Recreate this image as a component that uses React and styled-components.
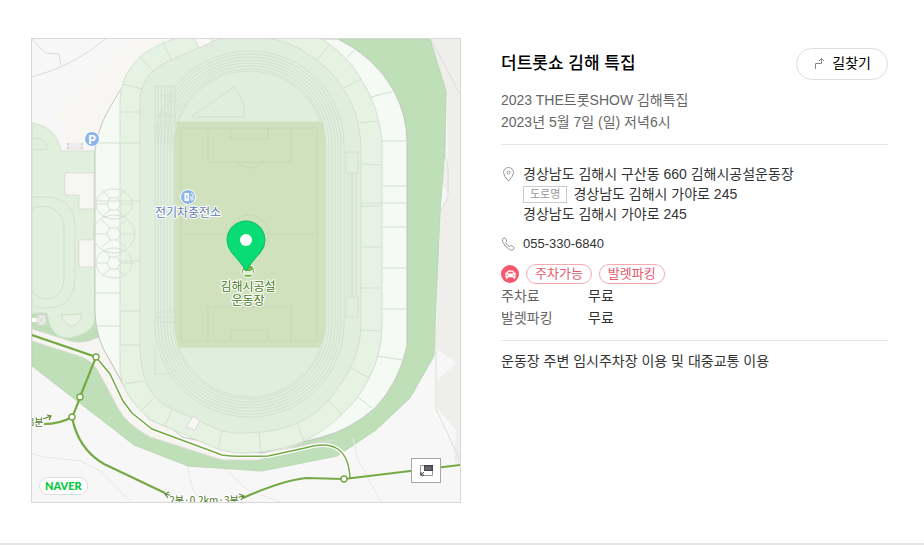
import React from "react";
import styled, { createGlobalStyle } from "styled-components";
import { FaCar as CarIcon } from "react-icons/fa";

const GlobalStyle = createGlobalStyle`
  * {
    box-sizing: border-box;
  }

  body {
    margin: 0;
    background: #fff;
    color: #333;
    font-family: "Liberation Sans", "Noto Sans CJK KR", sans-serif;
    font-size: 14px;
    line-height: 20px;
  }
`;

const Section = styled.section`
  display: grid;
  grid-template-columns: minmax(0, 430fr) minmax(0, 387fr);
  align-items: start;
  gap: 40px;
  padding: 38px 36px 40px 31px;
  border-bottom: 2px solid #e5e5e5;
`;

const MapBox = styled.div`
  position: relative;
  border: 1px solid #d9d9d9;
  overflow: hidden;
`;

const MapDrawing = styled.svg`
  display: block;
  width: 100%;
  height: auto;

  text {
    font-family: "Noto Sans CJK KR", sans-serif;
    paint-order: stroke;
    stroke: #fff;
    stroke-width: 2px;
    stroke-linejoin: round;
    text-anchor: middle;
  }
`;

const NaverLogo = styled.a`
  position: absolute;
  left: 7px;
  bottom: 7px;
  padding: 0 5px;
  border: 1px solid #ddd;
  border-radius: 9px;
  background: #fff;
  color: #03c73c;
  font-family: Lato, sans-serif;
  font-size: 11px;
  font-weight: 900;
  line-height: 16px;
  text-decoration: none;
`;

const MiniMapButton = styled.button`
  position: absolute;
  right: 19px;
  bottom: 19px;
  display: flex;
  align-items: center;
  justify-content: center;
  width: 30px;
  height: 25px;
  padding: 0;
  border: 1px solid #a5a5ae;
  background: #fff;
  cursor: pointer;
`;

const Info = styled.div`
  padding-top: 10px;
`;

const Header = styled.header`
  display: flex;
  align-items: center;
  justify-content: space-between;
  margin-bottom: 9px;
`;

const Title = styled.h2`
  margin: 0;
  color: #000;
  font-size: 17px;
  font-weight: 500;
  line-height: 32px;
`;

const RouteButton = styled.button`
  display: flex;
  align-items: center;
  gap: 8px;
  height: 32px;
  padding: 0 16px 2px 17px;
  border: 1px solid #ddd;
  border-radius: 16px;
  background: #fff;
  color: #000;
  font: inherit;
  cursor: pointer;
`;

const Description = styled.p`
  margin: 0;
  color: #666;
  line-height: 22px;
`;

const Divider = styled.hr`
  margin: 11px 0 19px;
  border: 0;
  border-top: 1px solid #e5e5e5;
`;

const ContactRow = styled.div`
  display: flex;
  gap: 8px;
  margin-bottom: 10px;

  & > svg {
    flex: none;
    margin-top: 3px;
  }
`;

const Address = styled.address`
  font-style: normal;
`;

const AddressLine = styled.div`
  display: flex;
  align-items: center;
  gap: 6px;
`;

const RoadBadge = styled.span`
  padding: 0 6px;
  border: 1px solid #c8ccd2;
  color: #999;
  font-size: 11px;
  line-height: 15px;
`;

const Phone = styled.a`
  color: #333;
  font-size: 13px;
  text-decoration: none;
`;

const TagRow = styled.div`
  display: flex;
  align-items: center;
  gap: 7px;
  margin-bottom: 1px;
`;

const CarBadge = styled.span`
  display: flex;
  align-items: center;
  justify-content: center;
  width: 18px;
  height: 18px;
  border-radius: 50%;
  background: #f9576f;
  color: #fff;
  font-size: 11px;
`;

const Tag = styled.span`
  padding: 0 8px;
  border: 1px solid #f5a9b1;
  border-radius: 10px;
  color: #e4586c;
  font-size: 13px;
  line-height: 18px;
`;

const FeeList = styled.dl`
  display: grid;
  grid-template-columns: 87px 1fr;
  margin: 0;
  line-height: 22px;

  dt {
    color: #666;
  }

  dd {
    margin: 0;
  }
`;

const Notice = styled.p`
  margin: -9px 0 0;
`;

// distances of the lane lines from the outer edge of the running track
const LANES = [0, 3, 6, 9, 12, 15, 18, 20];

const OUTER_RING =
  "M95 151Q96 137 102 123Q110 106 123 86Q126 70 145 54L177 39H338Q375 57 394 91Q407 116 407 141V346Q399 383 375 408Q350 430 322 437L261 453L182 437L124 385L104 350Q96 335 95 312Z";
const MIDDLE_RING =
  "M120 101Q120 76 140 57Q150 47 177 38L220 30L305 30Q344 48 361 79Q379 107 382 141V325Q382 354 369 378Q359 399 342 414Q325 431 304 441Q282 451 248 453Q235 454 218 449L165 426Q150 421 141 411Q122 391 120 372Z";
const INNER_RING =
  "M140 101Q140 73 171 60L211 42Q223 37 244 36Q285 35 317 60Q361 95 361 151V325Q361 362 328 401Q302 431 249 433Q235 434 222 431L172 409Q140 395 140 346Z";

const Grounds = () => (
  <g>
    <path d="M32 39H136L83 85V151H32Z" fill="#f7f7f7" />
    <path d="M136 39L83 85V133L95 151L104 118L123 86L140 57L175 39Z" fill="#f8f6f2" />
    <path d="M56 116L67 132V151H95L83 130V85Z" fill="#f8f6f2" />
    <path d="M105 39Q76 65 32 77M32 39L45 53L59 54L61 65" fill="none" stroke="#d9dada" />
    <path d="M430 39H460V466L454 460L456 430L437 408L436 180L448 160L446 91Z" fill="#efeeeb" />
    <path d="M437 350L448 357H451L456 364L447 371L437 381ZM442 184L449 195L440 212Z" fill="#f8f7f8" />
    <path d="M430 39Q444 62 460 95M444 148L448 168V196L440 213M436 330V409L460 460" fill="none" stroke="#dadfd8" />
    <path
      d="M338 39H430L446 91L445 148L440 212L436 302L434 356L410 398L376 430L337 456L262 471L188 466L134 445L32 366V335L95 355L120 404L180 438L261 457L322 437L375 408L407 346V141L394 91Z"
      fill="#bedfb8"
      stroke="#bad9b5"
    />
    <path d="M32 313H60L96 312L99 337L96 348L32 330Z" fill="#bedfb8" />
    <path
      d="M32 329L61 338Q80 347 99 337L104 350L130 398L150 420L220 449L261 453L335 440L304 445L258 460H222L150 437Q126 424 118 408L97 369Q91 361 82 357L32 341Z"
      fill="#f7f5f2"
      stroke="#d9ddd5"
    />
    <path
      d="M32 123Q57 127 61 151H95V173H65V195H79V209H94V240H79V267H95V318Q94 330 80 335Q54 345 48 318L47 313H32Z"
      fill="#e0f0dc"
      stroke="#d3e2cf"
    />
    <path d="M65 173H94V209H79V195H65ZM79 240H94V267H79Z" fill="#f8f6f3" stroke="#dde1d8" />
    <path
      d="M32 197H48Q75 199 75 228V277Q75 306 49 308Q40 309 32 305M32 209Q41 204 51 208Q63 213 64 226V280Q62 297 49 299Q38 300 32 290M32 139Q45 136 48 149L32 150"
      fill="none"
      stroke="#d0e1ce"
    />
    <path d="M61 315L82 314Q79 325 72 326Q64 325 61 315Z" fill="#e8f3e5" stroke="#cedfca" />
    <path d="M67 143H83V151H67Z" fill="#eeebea" />
    <path d="M68 143V151M82 143V151" stroke="#b8b8b4" strokeDasharray="2 2" />
    <path d="M32 318H37V322H32Z" fill="#fff" />
    <path
      d="M37 315H46V325H37ZM37 315L46 325M46 315L37 325"
      fill="#ecefe9"
      stroke="#d1d7cd"
    />
    <path
      d="M32 453L43 457L81 461L102 472L131 502M188 467Q190 489 199 498M225 469L248 490L280 502M353 438L357 458L381 502"
      fill="none"
      stroke="#e7e9e5"
    />
  </g>
);

const Stadium = () => (
  <g fill="none" stroke="#d2e1d0">
    <path d={OUTER_RING} fill="#f5faf5" stroke="#bfc9bd" />
    <path d={MIDDLE_RING} fill="#e6f3e2" />
    <path d={INNER_RING} fill="#e0efdd" />
    <path d="M123 84L142 89M140 57L153 71M163 41L171 60M120 112H140M95 143H140M95 201H140M120 261H140M95 293H120M95 326H120M120 311H140M120 345H140M125 384L143 381M141 411L154 398M165 426L172 409M218 449L222 431" />
    <path d="M330 44L317 60M355 50L347 57M361 79L344 88M394 91L371 97M379 121L359 123M382 141H407M361 164L382 165M382 186H407M361 203H407M361 206H382M382 227H407M361 247H382M382 268H407M361 288H382M382 309H407M361 330L382 331M377 356L403 360M369 378L351 368M372 408L358 397M342 414L328 401M304 441L297 423M261 453L259 433" />
    <path d="M194 38L199 48L212 42L208 35Z" fill="#fbf9f6" stroke="#d8ddd4" />
    <path d="M188 424L193 416L200 421L195 430L186 427Z" fill="#f8f6f4" stroke="#d7dcd3" />
    {[204, 234, 263].map((y) => (
      <g key={y} stroke="#d6e0d5">
        <ellipse cx="114" cy={y} rx={y === 234 ? 21 : 18} ry={y === 234 ? 19 : 15} />
        <path
          d={`M107 ${y}L110 ${y - 6}H117L121 ${y}L117 ${y + 6}H110ZM94 ${y}H107M121 ${y}H134M110 ${y - 6}L102 ${y - 14}M117 ${y - 6}L126 ${y - 14}M110 ${y + 6}L102 ${y + 13}M117 ${y + 6}L126 ${y + 13}`}
        />
      </g>
    ))}
    {LANES.map((lane) => (
      <rect
        key={lane}
        x={155 + lane}
        y={51 + lane}
        width={189 - lane * 2}
        height={366 - lane * 2}
        rx={94 - lane}
      />
    ))}
    <path d="M155 86H175V146M155 86V145M158 86V145M161 86V145M165 86V145M168 86V145M171 86V145M155 96H175M155 116H175M155 136H175M155 312H175M155 317H175M155 322H175M155 346V374H171" />
    <path d="M178 122H322L325 140V330L320 347H179L175 330V140Z" fill="#d0e2bd" stroke="#cbdebb" />
    <g stroke="#c5d7b4">
      <path d="M181 128H317V341H181ZM181 234H317M208 128V162H291V128M231 128V139H268V128M208 341V307H291V341M231 341V330H268V341" />
      <path d="M236 162Q250 174 263 162M236 307Q250 295 263 307" />
      <circle cx="249" cy="235" r="20" />
    </g>
    <path d="M191 117L234 87Q246 101 244 117Z" />
    <path d="M346 152H358V173H346ZM346 297H358V317H346ZM348 173V297M351 173V297M353 173V297M356 173V297" />
  </g>
);

const Routes = () => (
  <g fill="none" stroke="#75a944">
    <path d="M96 357L110 374L123 401L132 413L152 429L222 455Q231 457 268 456L305 448Q348 435 350 478" stroke="#fff" strokeWidth="4" />
    <path d="M96 357L110 374L123 401L132 413L152 429L222 455Q231 457 268 456L305 448Q348 435 350 478" strokeWidth="1.5" />
    <path d="M32 335L96 357L80 397Q76 409 72 417Q60 424 44 424M72 417Q78 449 104 464L165 493M243 498L252 494Q286 480 306 478L344 479L460 465" strokeWidth="2.2" />
    <g fill="#fff" strokeWidth="1.4">
      <circle cx="96" cy="357" r="3" />
      <circle cx="80" cy="397" r="3" />
      <circle cx="72" cy="417" r="3" />
      <circle cx="344" cy="479" r="3" />
    </g>
    <path
      d="M43 419L51 416M47 415L51 416L49 420M165 494L173 496M169 492L165 494L168 498M235 498L244 496M239 494L244 496L241 500"
      stroke="#5b8634"
      strokeWidth="1.2"
    />
  </g>
);

const MapLabels = () => (
  <g>
    <circle cx="92" cy="139" r="7.5" fill="#8db5ea" stroke="#fff" />
    <text x="92" y="143.5" fontSize="12" fontWeight="700" fill="#fff" style={{ stroke: "none" }}>
      P
    </text>
    <circle cx="188" cy="197" r="7.5" fill="#8db5ea" stroke="#fff" />
    <path d="M184.500 193H189V201H184.500Z" fill="#fff" />
    <path d="M190 196.500H191V199.500Q192 201 193 199.500V194.500L191 193" fill="none" stroke="#fff" />
    <path d="M187.500 194.500L186 197.200H187.800L186.500 199.500" fill="none" stroke="#8db5ea" strokeWidth=".8" />
    <text x="188" y="217" fontSize="12" fill="#5f7cb4">
      전기차충전소
    </text>
    <circle cx="248" cy="271" r="6.5" fill="#75b44a" stroke="#fff" />
    <path d="M244 270V274H252V270M244 272H252" fill="none" stroke="#fff" strokeWidth="1.5" />
    <path
      d="M246 271Q242 264 232 253Q227 247 227 240A19 19 0 0 1 265 240Q265 247 260 253Q250 264 246 271Z"
      fill="#09dc75"
      stroke="#08bd63"
    />
    <circle cx="246" cy="240" r="6" fill="#fff" />
    <text x="248" y="291" fontSize="12" fill="#3f7a17">
      김해시공설
    </text>
    <text x="248" y="305" fontSize="12" fill="#3f7a17">
      운동장
    </text>
    <text x="36" y="426" fontSize="10" fill="#4d7729">
      3분
    </text>
    <text x="204" y="504" fontSize="10" fill="#4d7729">
      2분·0.2km·3분
    </text>
  </g>
);

const RouteIcon = () => (
  <svg width="10" height="12" viewBox="0 0 10 12" fill="none" stroke="#888" aria-hidden="true">
    <path d="M1.5 12V6.5H7.5V1.5M5 4L7.5 1.5L10 4" />
  </svg>
);

const PinIcon = () => (
  <svg width="14" height="15" viewBox="0 0 14 15" fill="none" stroke="#999" aria-hidden="true">
    <path d="M7.5 14Q2.500 9 2.500 5.500A5 5 0 0 1 12.500 5.500Q12.500 9 7.500 14Z" />
    <circle cx="7.500" cy="5.500" r="1.500" />
  </svg>
);

const PhoneIcon = () => (
  <svg width="14" height="14" viewBox="0 0 14 14" fill="none" stroke="#999" aria-hidden="true">
    <path d="M2 1.500L4 .8L6 4L4.500 5.500Q6 8.500 8.500 9.500L10 8.300L13.200 10.500L12.500 12.500Q11 14 8.500 12.500Q3.500 9.500 1.500 4.500Q1 2.500 2 1.500Z" />
  </svg>
);

export default function App() {
  return (
    <>
      <GlobalStyle />
      <Section>
        <MapBox>
          <MapDrawing viewBox="32 39 428 463" role="img" aria-label="김해시공설운동장 지도">
            <rect x="32" y="39" width="428" height="463" fill="#f7f7f7" />
            <Grounds />
            <Stadium />
            <Routes />
            <MapLabels />
          </MapDrawing>
          <NaverLogo href="#naver">NAVER</NaverLogo>
          <MiniMapButton type="button" aria-label="미니맵">
            <svg width="13" height="11" viewBox="0 0 13 11" aria-hidden="true">
              <path d="M.5 .5H12.500V10.500H.5Z" fill="#fff" stroke="#999" />
              <path d="M4 0H13V6H4Z" fill="#44444a" />
              <path d="M5 1.500H11.500V5H5Z" fill="#666670" />
              <path d="M1 10L4 7M1 7V10H4" fill="none" stroke="#444" />
            </svg>
          </MiniMapButton>
        </MapBox>
        <Info>
          <Header>
            <Title>더트롯쇼 김해 특집</Title>
            <RouteButton type="button">
              <RouteIcon />
              길찾기
            </RouteButton>
          </Header>
          <Description>2023 THE트롯SHOW 김해특집</Description>
          <Description>2023년 5월 7일 (일) 저녁6시</Description>
          <Divider />
          <ContactRow>
            <PinIcon />
            <Address>
              <AddressLine>경상남도 김해시 구산동 660 김해시공설운동장</AddressLine>
              <AddressLine>
                <RoadBadge>도로명</RoadBadge>
                경상남도 김해시 가야로 245
              </AddressLine>
              <AddressLine>경상남도 김해시 가야로 245</AddressLine>
            </Address>
          </ContactRow>
          <ContactRow>
            <PhoneIcon />
            <Phone href="tel:055-330-6840">055-330-6840</Phone>
          </ContactRow>
          <TagRow>
            <CarBadge>
              <CarIcon />
            </CarBadge>
            <Tag>주차가능</Tag>
            <Tag>발렛파킹</Tag>
          </TagRow>
          <FeeList>
            <dt>주차료</dt>
            <dd>무료</dd>
            <dt>발렛파킹</dt>
            <dd>무료</dd>
          </FeeList>
          <Divider />
          <Notice>운동장 주변 임시주차장 이용 및 대중교통 이용</Notice>
        </Info>
      </Section>
    </>
  );
}
